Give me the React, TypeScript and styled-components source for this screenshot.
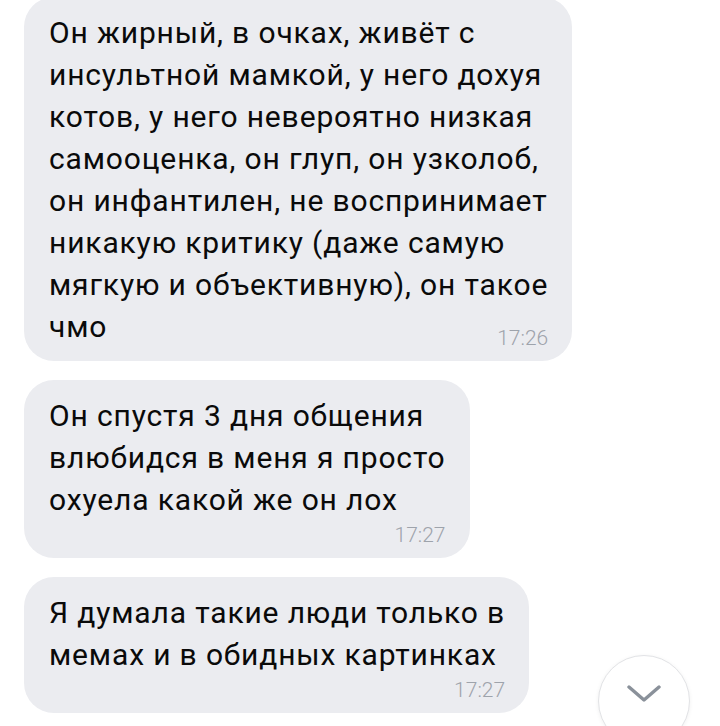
import styled, {createGlobalStyle} from 'styled-components';

interface Message {
  id: number;
  lines: string[];
  time: string;
  timeOnLastLine?: boolean;
}

const messages: Message[] = [
  {
    id: 1,
    lines: [
      'Он жирный, в очках, живёт с',
      'инсультной мамкой, у него дохуя',
      'котов, у него невероятно низкая',
      'самооценка, он глуп, он узколоб,',
      'он инфантилен, не воспринимает',
      'никакую критику (даже самую',
      'мягкую и объективную), он такое',
      'чмо',
    ],
    time: '17:26',
    timeOnLastLine: true,
  },
  {
    id: 2,
    lines: [
      'Он спустя 3 дня общения',
      'влюбидся в меня я просто',
      'охуела какой же он лох',
    ],
    time: '17:27',
  },
  {
    id: 3,
    lines: ['Я думала такие люди только в', 'мемах и в обидных картинках'],
    time: '17:27',
  },
];

function Bubble({lines, time, timeOnLastLine}: Message) {
  return (
    <BubbleDiv>
      <TextDiv>
        {lines.map((line, i) => (
          <div key={i}>{line}</div>
        ))}
      </TextDiv>
      <TimeSpan $overlap={!!timeOnLastLine}>{time}</TimeSpan>
    </BubbleDiv>
  );
}

function App() {
  return (
    <>
      <GlobalStyle />
      <Screen>
        <List>
          {messages.map(m => (
            <Bubble key={m.id} {...m} />
          ))}
        </List>
        <ScrollDownButton aria-label="Вниз">
          <svg width="34" height="18" viewBox="0 0 34 18" fill="none">
            <path
              d="M2 2 L17 15 L32 2"
              stroke="#8a919a"
              strokeWidth="3.4"
              strokeLinecap="round"
              strokeLinejoin="round"
            />
          </svg>
        </ScrollDownButton>
      </Screen>
    </>
  );
}

const GlobalStyle = createGlobalStyle`
  html, body {
    margin: 0;
    padding: 0;
    background: #ffffff;
  }
  body {
    font-family: Roboto, "Liberation Sans", sans-serif;
  }
`;

const Screen = styled.div`
  position: relative;
  width: 720px;
  height: 726px;
  overflow: hidden;
  background: #ffffff;
`;

const List = styled.div`
  display: flex;
  flex-direction: column;
  align-items: flex-start;
  gap: 19px;
  padding: 0 24px;
  margin-top: -3px;
`;

const BubbleDiv = styled.div`
  display: flex;
  flex-direction: column;
  background: #ebecf0;
  border-radius: 30px;
  padding: 15px 24px 10px 25px;
  color: #0a0a0a;
`;

const TextDiv = styled.div`
  font-size: 30px;
  letter-spacing: 0.85px;
  line-height: 42px;
  white-space: nowrap;
`;

const TimeSpan = styled.span<{$overlap: boolean}>`
  align-self: flex-end;
  margin-top: ${p => (p.$overlap ? '-23px' : '1px')};
  font-size: 21px;
  line-height: 26px;
  font-weight: 300;
  color: #9ea3ab;
`;

const ScrollDownButton = styled.button`
  position: absolute;
  left: 598px;
  top: 655px;
  width: 92px;
  height: 92px;
  border-radius: 50%;
  border: 1.5px solid #e2e3e6;
  background: #ffffff;
  box-shadow: 0 1px 4px rgba(0, 0, 0, 0.06);
  display: flex;
  align-items: center;
  justify-content: center;
  padding: 0;
  padding-bottom: 14px;
  cursor: pointer;
`;

export default App;
